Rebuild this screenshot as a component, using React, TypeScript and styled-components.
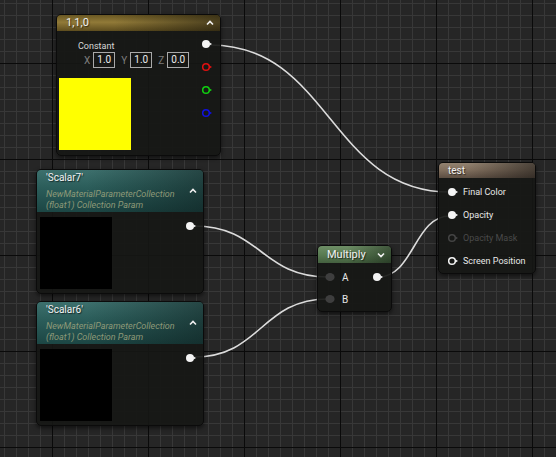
import React from "react"
import styled, { createGlobalStyle } from "styled-components"

const GlobalStyle = createGlobalStyle`
    * {
        box-sizing: border-box;
    }
    body {
        margin: 0;
        background: #262626;
        font-family: Roboto, "Liberation Sans", sans-serif;
    }
`

const Canvas = styled.div`
    position: relative;
    width: 556px;
    height: 457px;
    overflow: hidden;
    background-color: #262626;
    background-image: linear-gradient(to right, #0a0a0a 1px, transparent 1px),
        linear-gradient(to bottom, #0a0a0a 1px, transparent 1px),
        linear-gradient(to right, #383838 1px, transparent 1px),
        linear-gradient(to bottom, #383838 1px, transparent 1px);
    background-size: 96px 96px, 96px 96px, 12px 12px, 12px 12px;
    background-position: 52px 0, 0 63px, 4px 0, 0 3px;
`

const Wires = styled.svg`
    position: absolute;
    left: 0;
    top: 0;
`

const Node = styled.div<{ $x: number; $y: number; $w: number; $h: number }>`
    position: absolute;
    left: ${p => p.$x}px;
    top: ${p => p.$y}px;
    width: ${p => p.$w}px;
    height: ${p => p.$h}px;
    display: flex;
    flex-direction: column;
    background: rgba(22, 23, 21, 0.92);
    border: 1px solid #0b0b0b;
    border-radius: 5px;
    box-shadow: 0 2px 4px rgba(0, 0, 0, 0.55);
    overflow: hidden;
`

const TONES: Record<string, string> = {
    gold: "linear-gradient(to right, rgba(0,0,0,0) 35%, rgba(20,18,10,0.55) 100%), linear-gradient(to bottom, #6a5823 0%, #917a38 45%, #5e4d1e 100%)",
    teal: "linear-gradient(to right, rgba(0,0,0,0) 30%, rgba(10,20,20,0.45) 100%), linear-gradient(to bottom, #3d706d 0%, #2c5e5b 40%, #1c4644 100%)",
    green: "linear-gradient(to right, rgba(0,0,0,0) 40%, rgba(10,20,10,0.45) 100%), linear-gradient(to bottom, #6e8e66 0%, #5a7c53 50%, #44603f 100%)",
    brown: "linear-gradient(to right, rgba(0,0,0,0) 30%, rgba(20,18,16,0.55) 100%), linear-gradient(to bottom, #928270 0%, #7f6d5c 50%, #5c4e42 100%)",
}

const Header = styled.div<{ $tone: string; $h: number }>`
    height: ${p => p.$h}px;
    flex-shrink: 0;
    display: flex;
    align-items: center;
    justify-content: space-between;
    padding: 0 5px 0 9px;
    background: ${p => TONES[p.$tone]};
`

const TitleBlock = styled.div`
    display: flex;
    flex-direction: column;
`

const Title = styled.div<{ $size?: number }>`
    font-size: ${p => p.$size || 10}px;
    line-height: 12px;
    color: #f2f2f2;
    white-space: nowrap;
    text-shadow: 1px 1px 1px rgba(0, 0, 0, 0.6);
`

const Subtitle = styled.div`
    margin-top: 5px;
    font-size: 9px;
    line-height: 10.5px;
    font-style: italic;
    color: #8d9978;
    white-space: nowrap;
`

const Body = styled.div<{ $pad: string }>`
    flex: 1;
    display: flex;
    justify-content: space-between;
    align-items: flex-start;
    padding: ${p => p.$pad};
`

const Column = styled.div<{ $gap?: number; $top?: number; $fill?: boolean }>`
    display: flex;
    flex-direction: column;
    gap: ${p => p.$gap || 0}px;
    padding-top: ${p => p.$top || 0}px;
    width: ${p => (p.$fill ? "100%" : "auto")};
`

const ConstLabel = styled.div`
    margin: 9px 0 0 19px;
    font-size: 9px;
    line-height: 12px;
    color: #d8d8d8;
`

const ValueRow = styled.div`
    display: flex;
    align-items: center;
    height: 16px;
    margin-left: 25px;
`

const Axis = styled.span`
    font-size: 10px;
    color: #7e7e7e;
    margin-right: 3px;
`

const ValueBox = styled.span`
    width: 22px;
    height: 16px;
    margin-right: 6px;
    border: 1px solid #a9a9a9;
    font-size: 10px;
    line-height: 14px;
    text-align: center;
    color: #ececec;
`

const Swatch = styled.div<{ $color: string; $top: number }>`
    width: 72px;
    height: 72px;
    margin-top: ${p => p.$top}px;
    background: ${p => p.$color};
`

const PinRow = styled.div<{ $dim?: boolean }>`
    display: flex;
    align-items: center;
    height: 10px;
    gap: 4px;
    font-size: 9px;
    color: ${p => (p.$dim ? "#4a4a4a" : "#e8e8e8")};
    white-space: nowrap;
`

const SplitRow = styled.div`
    display: flex;
    align-items: center;
    justify-content: space-between;
    height: 10px;
`

const PinLabel = styled.span`
    margin-left: 1px;
    font-size: 10px;
    color: #e6e6e6;
`

const Pin = (props: { color?: string; hollow?: boolean; arrow?: boolean }) => {
    const c = props.color || "#f4f4f4"
    return (
        <svg width="12" height="10" viewBox="0 0 12 10">
            {props.hollow ? (
                <circle cx="5" cy="5" r="3.3" fill="none" stroke={c} strokeWidth="1.5" />
            ) : (
                <ellipse cx="5" cy="5" rx={props.arrow === false ? 4.6 : 4} ry="4" fill={c} />
            )}
            {props.arrow !== false && <polygon points="8.6,3.4 11,5 8.6,6.6" fill={c} />}
        </svg>
    )
}

const Caret = (props: { down?: boolean }) => (
    <svg width="10" height="8" viewBox="0 0 10 8">
        <polyline
            points={props.down ? "2,2.5 5,5.5 8,2.5" : "2,5.5 5,2.5 8,5.5"}
            fill="none"
            stroke="#f0f0f0"
            strokeWidth="1.6"
        />
    </svg>
)

const wire = (x1: number, y1: number, x2: number, y2: number) => {
    const d = Math.max(30, (x2 - x1) * 0.5)
    return `M ${x1} ${y1} C ${x1 + d} ${y1}, ${x2 - d} ${y2}, ${x2} ${y2}`
}

const WIRES = [
    wire(210, 45, 450, 192),
    wire(194, 226, 328, 277),
    wire(194, 357, 328, 299),
    wire(378, 277, 450, 216),
]

const ScalarNode = (props: { y: number; name: string }) => (
    <Node $x={36} $y={props.y} $w={168} $h={125}>
        <Header $tone="teal" $h={42}>
            <TitleBlock>
                <Title>'{props.name}'</Title>
                <Subtitle>
                    NewMaterialParameterCollection
                    <br />
                    (float1) Collection Param
                </Subtitle>
            </TitleBlock>
            <Caret />
        </Header>
        <Body $pad="5px 6px 4px 3px">
            <Swatch $color="#000" $top={0} />
            <Column $top={4}>
                <Pin />
            </Column>
        </Body>
    </Node>
)

const App = () => {
    return (
        <Canvas>
            <GlobalStyle />
            <Wires width="556" height="457">
                {WIRES.map((d, i) => (
                    <path key={i} d={d} fill="none" stroke="#dcdcdc" strokeWidth="1.6" />
                ))}
            </Wires>

            <Node $x={56} $y={14} $w={165} $h={142}>
                <Header $tone="gold" $h={16}>
                    <Title $size={11}>1,1,0</Title>
                    <Caret />
                </Header>
                <Body $pad="0 7px 6px 2px">
                    <Column>
                        <ConstLabel>Constant</ConstLabel>
                        <ValueRow>
                            <Axis>X</Axis>
                            <ValueBox>1.0</ValueBox>
                            <Axis>Y</Axis>
                            <ValueBox>1.0</ValueBox>
                            <Axis>Z</Axis>
                            <ValueBox>0.0</ValueBox>
                        </ValueRow>
                        <Swatch $color="#ffff00" $top={10} />
                    </Column>
                    <Column $gap={13} $top={8}>
                        <Pin />
                        <Pin hollow color="#e01010" />
                        <Pin hollow color="#10d010" />
                        <Pin hollow color="#1010e0" />
                    </Column>
                </Body>
            </Node>

            <ScalarNode y={169} name="Scalar7" />
            <ScalarNode y={301} name="Scalar6" />

            <Node $x={317} $y={245} $w={75} $h={67}>
                <Header $tone="green" $h={17}>
                    <Title $size={11}>Multiply</Title>
                    <Caret down />
                </Header>
                <Body $pad="9px 7px 7px 7px">
                    <Column $gap={12} $fill>
                        <SplitRow>
                            <PinRow>
                                <Pin color="#3e3e3e" arrow={false} />
                                <PinLabel>A</PinLabel>
                            </PinRow>
                            <Pin />
                        </SplitRow>
                        <PinRow>
                            <Pin color="#3e3e3e" arrow={false} />
                            <PinLabel>B</PinLabel>
                        </PinRow>
                    </Column>
                </Body>
            </Node>

            <Node $x={438} $y={162} $w={98} $h={112}>
                <Header $tone="brown" $h={15}>
                    <Title>test</Title>
                </Header>
                <Body $pad="9px 4px 7px 8px">
                    <Column $gap={13}>
                        <PinRow>
                            <Pin />
                            Final Color
                        </PinRow>
                        <PinRow>
                            <Pin />
                            Opacity
                        </PinRow>
                        <PinRow $dim>
                            <Pin hollow color="#444" />
                            Opacity Mask
                        </PinRow>
                        <PinRow>
                            <Pin hollow />
                            Screen Position
                        </PinRow>
                    </Column>
                </Body>
            </Node>
        </Canvas>
    )
}

export default App
